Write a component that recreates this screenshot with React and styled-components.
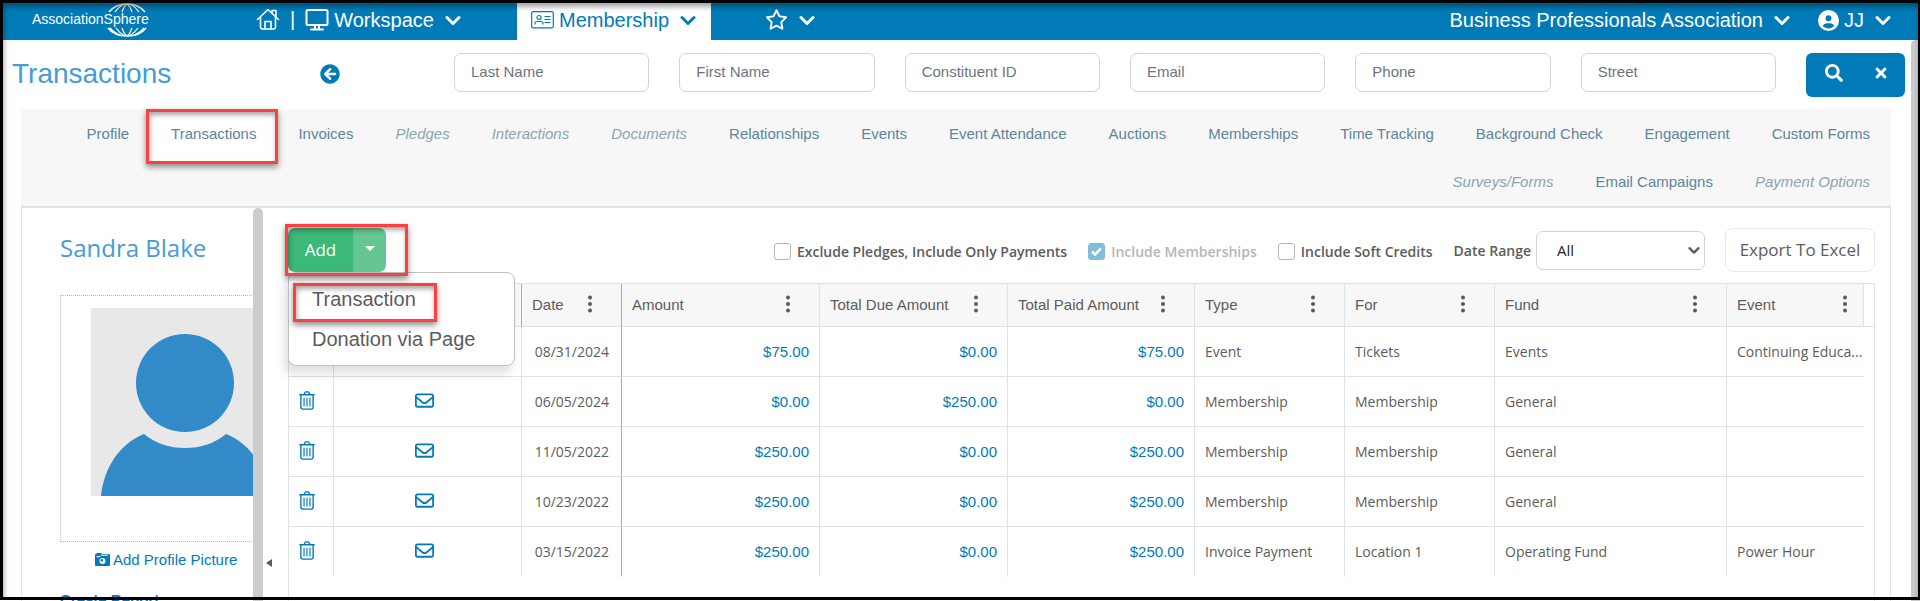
import styled, { createGlobalStyle, css } from "styled-components";
import { FaRegEnvelope, FaRegStar, FaCircleUser } from "react-icons/fa6";
import { FaArrowCircleLeft, FaSearch, FaTimes } from "react-icons/fa";

const SANS = `"Liberation Sans", Arial, sans-serif`;
const UI = `"Open Sans", "Noto Sans", sans-serif`;

const BLUE = "#007bb8";
const LINE = "#dee2e6";
const TEXT = "#5c5c5c";

const GlobalStyle = createGlobalStyle`
  *, *::before, *::after {
    box-sizing: border-box;
  }
  body {
    margin: 0;
    font-family: ${SANS};
    font-size: 15px;
    color: ${TEXT};
    background: white;
  }
  a {
    color: inherit;
    text-decoration: none;
  }
  button {
    font-family: inherit;
    cursor: pointer;
  }
`;

const Page = styled.div`
  position: relative;
  display: flex;
  flex-direction: column;
  height: 100vh;
  overflow: hidden;
`;

const Frame = styled.div`
  position: absolute;
  inset: 0 0 1px 0;
  z-index: 20;
  border: 3px solid black;
  border-right-width: 2px;
  box-shadow: inset 1px 4px 5px rgba(0, 0, 0, 0.35);
  pointer-events: none;
`;

/* red marker laid over a control */
const Marker = styled.span`
  position: absolute;
  inset: ${({ $inset }) => $inset};
  z-index: ${({ $behind }) => ($behind ? -1 : 5)};
  border: 3px solid #fb4242;
  background: ${({ $behind }) => ($behind ? "white" : "none")};
  box-shadow:
    0 3px 6px rgba(0, 0, 0, 0.45),
    inset 1px 3px 5px rgba(0, 0, 0, 0.35);
  pointer-events: none;
`;

/* ---------- top bar ---------- */

const TopBar = styled.header`
  display: flex;
  flex: none;
  height: 40px;
  padding-left: 32px;
  padding-right: 29px;
  background: ${BLUE};
  color: white;
  font-size: 20px;
`;

const LogoLink = styled.a`
  display: block;
  width: 118px;
  height: 37px;
  margin-right: 106px;
`;

const BarLink = styled.a`
  display: flex;
  align-items: center;
`;

const BarButton = styled.button`
  display: flex;
  align-items: center;
  gap: 5px;
  padding: 1px 0 8px;
  border: none;
  background: none;
  color: inherit;
  font-size: 20px;
  line-height: 24px;
  ${({ $active }) =>
    $active &&
    css`
      background: white;
      color: ${BLUE};
      padding-left: 14px;
      padding-right: 15px;
    `}
  > svg {
    flex: none;
  }
  > svg:last-child {
    margin-left: 6px;
  }
`;

const WorkspaceGroup = styled.div`
  display: flex;
  align-items: flex-start;
  gap: 10px;
  padding-top: 7px;
  width: 261px;
`;

const Divider = styled.span`
  line-height: 24px;
`;

const MembershipTab = styled.div`
  display: flex;
  padding-top: 7px;
  background: white;
`;

const StarGroup = styled.div`
  padding-top: 7px;
  margin-left: 54px;
`;

const AccountGroup = styled.div`
  display: flex;
  gap: 28px;
  padding-top: 7px;
  margin-left: auto;
`;

/* ---------- page scroll area ---------- */

const Scroller = styled.div`
  display: flex;
  flex: 1;
  min-height: 0;
`;

const Content = styled.div`
  display: flex;
  flex-direction: column;
  flex: 1;
  min-width: 0;
`;

const ScrollTrack = styled.div`
  flex: none;
  width: 9px;
  border-top-left-radius: 5px;
  background: #cacaca;
`;

/* ---------- search row ---------- */

const SearchRow = styled.form`
  display: flex;
  align-items: flex-start;
  flex: none;
  padding: 13px 6px 12px 12px;
`;

const TitleBlock = styled.div`
  display: flex;
  justify-content: space-between;
  align-items: center;
  width: 328px;
  height: 42px;
  margin-right: 114px;
`;

const Title = styled.h1`
  margin: 0;
  color: #459cd6;
  font-size: 28px;
  font-weight: normal;
  line-height: 32px;
`;

const BackButton = styled.button`
  display: flex;
  padding: 0;
  border: none;
  background: none;
  color: ${BLUE};
  font-size: 20px;
`;

const Fields = styled.div`
  display: grid;
  grid-template-columns: repeat(6, 1fr);
  gap: 30px;
  flex: 1;
  margin-right: 30px;
`;

const Field = styled.input`
  width: 100%;
  min-width: 0;
  height: 39px;
  padding: 0 15px 2px 16px;
  border: 1px solid #ced4da;
  border-radius: 7px;
  font-family: ${SANS};
  font-size: 15px;
  &::placeholder {
    color: #6c757d;
    opacity: 1;
  }
`;

const SearchButtons = styled.div`
  display: flex;
  width: 99px;
  height: 44px;
  padding-left: 4px;
  border-radius: 6px;
  background: ${BLUE};
`;

const SearchButton = styled.button`
  display: flex;
  flex: 1;
  align-items: center;
  justify-content: center;
  padding: 0 0 4px;
  border: none;
  background: none;
  color: white;
  font-size: ${({ $size }) => $size}px;
`;

/* ---------- section tabs ---------- */

const Tabs = styled.nav`
  position: relative;
  z-index: 1;
  display: flex;
  flex-wrap: wrap;
  justify-content: flex-end;
  flex: none;
  margin: 0 20px 0 21px;
  padding-top: 1px;
  border-bottom: 2px solid ${LINE};
  background: #f7f7f7;
`;

const Tab = styled.a`
  position: relative;
  z-index: 0;
  padding: 0 21px;
  color: ${({ $muted }) => ($muted ? "#8aa5b3" : "#5c859d")};
  font-style: ${({ $muted }) => ($muted ? "italic" : "normal")};
  line-height: 48px;
  white-space: nowrap;
`;

/* ---------- body ---------- */

const Body = styled.div`
  display: flex;
  flex: 1;
  min-height: 0;
  margin: 0 20px 0 21px;
  border: solid ${LINE};
  border-width: 0 1px;
`;

const Sidebar = styled.aside`
  flex: none;
  width: 231px;
  padding: 24px 0 0 38px;
  overflow: hidden;
`;

const PersonName = styled.h2`
  margin: 0 0 31px;
  color: #459cd6;
  font-family: ${UI};
  font-size: 24px;
  font-weight: normal;
  line-height: 32px;
`;

const PhotoBox = styled.div`
  width: 250px;
  height: 247px;
  padding: 12px 30px;
  border: 1px dotted #b9b9b9;
`;

const PhotoLink = styled.a`
  display: flex;
  align-items: center;
  gap: 3px;
  margin: 9px 0 22px 35px;
  color: ${BLUE};
  line-height: 18px;
  white-space: nowrap;
`;

const RecordLink = styled.a`
  color: ${BLUE};
  font-weight: bold;
  line-height: 18px;
`;

const Splitter = styled.div`
  flex: none;
  width: 10px;
  border-radius: 5px 5px 0 0;
  background: #cccccc;
`;

const CollapseButton = styled.button`
  align-self: flex-end;
  flex: none;
  display: flex;
  width: 15px;
  padding: 0 0 0 3px;
  margin-bottom: 34px;
  border: none;
  background: none;
  color: ${TEXT};
`;

const Main = styled.main`
  display: flex;
  flex-direction: column;
  flex: 1;
  min-width: 0;
  padding: 20px 15px 0 10px;
`;

const Toolbar = styled.div`
  display: flex;
  align-items: center;
  flex: none;
  margin-bottom: 11px;
  font-family: ${UI};
  font-size: 14px;
  font-weight: 600;
`;

const SplitButton = styled.div`
  position: relative;
  display: flex;
  height: 44px;
  margin-right: auto;
`;

const AddButton = styled.button`
  width: 65px;
  padding: 0 0 2px;
  border: none;
  border-radius: 7px 0 0 7px;
  background: #3cb878;
  color: white;
  font-size: 17px;
`;

const AddToggle = styled.button`
  display: flex;
  align-items: center;
  justify-content: center;
  width: 33px;
  padding: 0 0 4px;
  border: none;
  border-radius: 0 7px 7px 0;
  background: #66c693;
`;

const Menu = styled.ul`
  position: absolute;
  top: 44px;
  left: 0;
  z-index: 4;
  width: 227px;
  margin: 0;
  padding: 6px 0;
  border: 1px solid #c0c0c0;
  border-radius: 8px;
  background: white;
  box-shadow: -4px 8px 10px rgba(0, 0, 0, 0.12);
  list-style: none;
`;

const MenuItem = styled.li`
  position: relative;
`;

const MenuLink = styled.a`
  display: block;
  padding: 0 23px;
  font-family: ${SANS};
  font-size: 20px;
  font-weight: normal;
  line-height: 40px;
`;

const Check = styled.label`
  display: flex;
  align-items: center;
  gap: 6px;
  margin-right: 21px;
  padding-top: 2px;
  color: ${({ $disabled }) => ($disabled ? "#b6b6b6" : TEXT)};
  white-space: nowrap;
`;

const CheckInput = styled.input`
  appearance: none;
  width: 17px;
  height: 17px;
  margin: 0;
  border: 1px solid #b5b5b5;
  border-radius: 3px;
  background: white;
  &:checked {
    border-color: #80bddb;
    background: #80bddb;
  }
`;

const CheckBox = styled.span`
  display: grid;
  > * {
    grid-area: 1 / 1;
    place-self: center;
  }
`;

const RangeLabel = styled.label`
  margin-right: 5px;
  white-space: nowrap;
`;

const SelectBox = styled.span`
  display: grid;
  width: 169px;
  margin-right: 20px;
  > * {
    grid-area: 1 / 1;
  }
  > svg {
    place-self: center end;
    margin-right: 5px;
    pointer-events: none;
  }
`;

const Select = styled.select`
  appearance: none;
  width: 100%;
  height: 39px;
  padding: 0 20px;
  border: 1px solid #ced4da;
  border-radius: 7px;
  background: white;
  color: #212529;
  font-family: ${UI};
  font-size: 15px;
`;

const ExportButton = styled.button`
  width: 150px;
  height: 44px;
  padding: 0 0 1px;
  border: 1px solid #e9ebed;
  border-radius: 8px;
  background: white;
  color: ${TEXT};
  font-size: 17px;
  white-space: nowrap;
`;

/* ---------- grid ---------- */

const GridBox = styled.div`
  flex: 1;
  min-height: 0;
  border: 1px solid ${LINE};
  border-bottom: none;
`;

const GridHeadLine = styled.div`
  background: linear-gradient(${LINE}, ${LINE}) 0 42px / 100% 1px no-repeat;
`;

const GridClip = styled.div`
  position: relative;
  margin-right: 10px;
  overflow: hidden;
  &::after {
    content: "";
    position: absolute;
    top: 0;
    right: 0;
    width: 1px;
    height: 42px;
    background: ${LINE};
  }
`;

const Table = styled.table`
  width: calc(100% + 13px);
  border-collapse: separate;
  border-spacing: 0;
  table-layout: fixed;
`;

const Col = styled.col`
  width: ${({ $width }) => ($width ? `${$width}px` : "auto")};
`;

const HeadCell = styled.th`
  height: 43px;
  padding: 0 28px 2px 10px;
  border-bottom: 1px solid ${LINE};
  border-right: 1px solid ${({ $dark }) => ($dark ? "#a9abad" : LINE)};
  background: #f7f7f7;
  font-weight: normal;
  text-align: left;
  white-space: nowrap;
`;

const HeadContent = styled.div`
  display: flex;
  align-items: center;
  justify-content: space-between;
`;

const MenuDots = styled.button`
  display: flex;
  padding: 0 0 1px;
  border: none;
  background: none;
  color: ${TEXT};
`;

const Cell = styled.td`
  height: 50px;
  padding: 0 ${({ $padRight }) => $padRight || 10}px 0 10px;
  border-bottom: 1px solid ${LINE};
  border-right: 1px solid ${({ $dark }) => ($dark ? "#a9abad" : LINE)};
  font-family: ${UI};
  font-size: 14px;
  text-align: ${({ $align }) => $align || "left"};
  white-space: nowrap;
  overflow: hidden;
  text-overflow: ellipsis;
  tr:last-child > & {
    border-bottom-color: transparent;
  }
`;

const AmountLink = styled.a`
  color: ${BLUE};
  font-family: ${SANS};
  font-size: 15px;
`;

const IconButton = styled.button`
  display: inline-flex;
  padding: 0 0 3px;
  border: none;
  background: none;
  color: ${BLUE};
  font-size: 19px;
  vertical-align: middle;
`;

/* ---------- drawings ---------- */

const Chevron = ({ size = 16 }) => (
  <svg width={size} height={size} viewBox="0 0 16 16" fill="none" stroke="currentColor" strokeWidth="3" strokeLinecap="round" strokeLinejoin="round">
    <path d="M2 5.5l6 6 6-6" />
  </svg>
);

const Logo = () => (
  <svg width="118" height="37" viewBox="0 0 118 37" fill="none" stroke="white" strokeWidth="1.4">
    <path d="M77 12C81 7 87 4 95 4s14 3 18 8" />
    <path d="M83 12c2-3 5-6 9-8M90 12c1-3 2-6 5-8M107 12c-2-3-5-6-9-8M100 12c-1-3-2-6-5-8" strokeWidth="1.2" />
    <path d="M76 28c4 5 10 8 19 8s15-3 19-8" strokeWidth="1.6" />
    <path d="M78 28c2 3 5 5 9 7M112 28c-2 3-5 5-9 7" strokeWidth="1.8" />
    <path d="M84 28c2 3 5 6 9 8M90 28c1 3 2 6 5 8M106 28c-2 3-5 6-9 8M100 28c-1 3-2 6-5 8" strokeWidth="1.2" />
    <text x="0" y="24" fill="white" stroke="none" fontFamily="Liberation Sans, Arial, sans-serif" fontSize="14">
      AssociationSphere
    </text>
  </svg>
);

const HomeIcon = () => (
  <svg width="24" height="24" viewBox="0 0 24 24" fill="none" stroke="currentColor" strokeWidth="1.6" strokeLinecap="round" strokeLinejoin="round">
    <path d="M1.5 12.5L12 2.5l10.500 10" />
    <path d="M4.500 10.500V20a2 2 0 0 0 2 2h11a2 2 0 0 0 2-2v-9.500" />
    <path d="M9 22v-7.500h6V22M16 6V3.500h4V10" />
  </svg>
);

const MonitorIcon = () => (
  <svg width="24" height="24" viewBox="0 0 24 24" fill="none" stroke="currentColor" strokeWidth="2" strokeLinejoin="round">
    <rect x="1.500" y="2" width="21" height="15" rx="1.500" />
    <path d="M10 17v4M14 17v4M6 21.500h12" strokeLinecap="round" />
  </svg>
);

const CardIcon = () => (
  <svg width="23" height="18" viewBox="0 0 23 18" fill="none" stroke="currentColor" strokeWidth="1.2">
    <rect x="0.700" y="0.700" width="21.600" height="16.200" rx="1.500" />
    <circle cx="8" cy="6.500" r="2" />
    <path d="M4 13.500v-1c0-1 1-2 2-2h4c1 0 2 1 2 2v1M13.500 5.500h6M13.500 8.500h6M13.500 11.500h6" />
  </svg>
);

const CameraIcon = () => (
  <svg width="15" height="14" viewBox="0 0 15 14">
    <path fill="currentColor" d="M2 0h4l1 1h7a1 1 0 0 1 1 1v10a1 1 0 0 1-1 1H1a1 1 0 0 1-1-1V2a1 1 0 0 1 1-1z" />
    <path d="M1.500 3.700H5l1.500-1.500H13" stroke="white" fill="none" />
    <circle cx="7.500" cy="8" r="3" fill="white" />
    <circle cx="6.800" cy="7.200" r="1.200" fill="currentColor" />
  </svg>
);

const TrashIcon = () => (
  <svg width="16" height="19" viewBox="0 0 15 18" fill="none" stroke="currentColor" strokeWidth="1.300" strokeLinecap="round">
    <path d="M.700 3.500h13.600M4.700 3.300l.9-1.900c.2-.4.500-.6.900-.6h2c.400 0 .7.200.9.600l.9 1.900" />
    <path d="M1.700 3.700v11.500c0 1.200.8 2 2 2h7.600c1.200 0 2-.8 2-2V3.700" />
    <path d="M4.700 6.700v7.500M7.500 6.700v7.500M10.300 6.700v7.500" strokeWidth="1.100" />
  </svg>
);

const DotsIcon = () => (
  <svg width="6" height="18" viewBox="0 0 6 18" fill="currentColor">
    <circle cx="3" cy="2.500" r="2" />
    <circle cx="3" cy="9" r="2" />
    <circle cx="3" cy="15.500" r="2" />
  </svg>
);

const Avatar = () => (
  <svg width="188" height="188" viewBox="0 0 188 188" role="img" aria-label="Profile picture">
    <rect width="188" height="188" fill="#e8e8e8" />
    <circle cx="94" cy="75" r="49" fill="#338ac8" />
    <path d="M10 188C13 160 28 136 53 126Q70 140 94 140T135 126C160 136 175 160 178 188z" fill="#338ac8" />
  </svg>
);

/* ---------- data ---------- */

const fields = ["Last Name", "First Name", "Constituent ID", "Email", "Phone", "Street"];

const tabs = [
  { label: "Profile" },
  { label: "Transactions", active: true },
  { label: "Invoices" },
  { label: "Pledges", muted: true },
  { label: "Interactions", muted: true },
  { label: "Documents", muted: true },
  { label: "Relationships" },
  { label: "Events" },
  { label: "Event Attendance" },
  { label: "Auctions" },
  { label: "Memberships" },
  { label: "Time Tracking" },
  { label: "Background Check" },
  { label: "Engagement" },
  { label: "Custom Forms" },
  { label: "Surveys/Forms", muted: true },
  { label: "Email Campaigns" },
  { label: "Payment Options", muted: true },
];

const columns = [
  { width: 45 },
  { width: 188, dark: true },
  { label: "Date", width: 100, dark: true },
  { label: "Amount", width: 198 },
  { label: "Total Due Amount", width: 188 },
  { label: "Total Paid Amount", width: 187 },
  { label: "Type", width: 150 },
  { label: "For", width: 150 },
  { label: "Fund", width: 232 },
  { label: "Event" },
];

const rows = [
  { date: "08/31/2024", amounts: ["$75.00", "$0.00", "$75.00"], info: ["Event", "Tickets", "Events", "Continuing Educa..."] },
  { date: "06/05/2024", amounts: ["$0.00", "$250.00", "$0.00"], info: ["Membership", "Membership", "General", ""] },
  { date: "11/05/2022", amounts: ["$250.00", "$0.00", "$250.00"], info: ["Membership", "Membership", "General", ""] },
  { date: "10/23/2022", amounts: ["$250.00", "$0.00", "$250.00"], info: ["Membership", "Membership", "General", ""] },
  { date: "03/15/2022", amounts: ["$250.00", "$0.00", "$250.00"], info: ["Invoice Payment", "Location 1", "Operating Fund", "Power Hour"] },
];

function Header() {
  return (
    <TopBar>
      <LogoLink href="#" aria-label="AssociationSphere">
        <Logo />
      </LogoLink>
      <WorkspaceGroup>
        <BarLink href="#" aria-label="Home">
          <HomeIcon />
        </BarLink>
        <Divider>|</Divider>
        <BarButton>
          <MonitorIcon />
          Workspace
          <Chevron />
        </BarButton>
      </WorkspaceGroup>
      <MembershipTab>
        <BarButton $active>
          <CardIcon />
          Membership
          <Chevron />
        </BarButton>
      </MembershipTab>
      <StarGroup>
        <BarButton aria-label="Favorites">
          <FaRegStar size={23} />
          <Chevron />
        </BarButton>
      </StarGroup>
      <AccountGroup>
        <BarButton>
          Business Professionals Association
          <Chevron />
        </BarButton>
        <BarButton>
          <FaCircleUser size={21} />
          JJ
          <Chevron />
        </BarButton>
      </AccountGroup>
    </TopBar>
  );
}

function SearchBar() {
  return (
    <SearchRow onSubmit={(e) => e.preventDefault()}>
      <TitleBlock>
        <Title>Transactions</Title>
        <BackButton type="button" aria-label="Back">
          <FaArrowCircleLeft />
        </BackButton>
      </TitleBlock>
      <Fields>
        {fields.map((name) => (
          <Field key={name} type="text" placeholder={name} aria-label={name} />
        ))}
      </Fields>
      <SearchButtons>
        <SearchButton aria-label="Search" $size={18}>
          <FaSearch />
        </SearchButton>
        <SearchButton type="reset" aria-label="Clear" $size={16}>
          <FaTimes />
        </SearchButton>
      </SearchButtons>
    </SearchRow>
  );
}

function ActionBar() {
  return (
    <Toolbar>
      <SplitButton>
        <AddButton>Add</AddButton>
        <AddToggle aria-label="More add options">
          <svg width="10" height="5" viewBox="0 0 10 5">
            <path d="M0 0h10L5 5z" fill="white" />
          </svg>
        </AddToggle>
        <Marker $inset="-4px -22px -4px -3px" />
        <Menu>
          <MenuItem>
            <MenuLink href="#">Transaction</MenuLink>
            <Marker $inset="4px 77px -3px 4px" />
          </MenuItem>
          <MenuItem>
            <MenuLink href="#">Donation via Page</MenuLink>
          </MenuItem>
        </Menu>
      </SplitButton>
      <Check>
        <CheckInput type="checkbox" />
        Exclude Pledges, Include Only Payments
      </Check>
      <Check $disabled>
        <CheckBox>
          <CheckInput type="checkbox" defaultChecked disabled />
          <svg width="11" height="9" viewBox="0 0 11 9" fill="none" stroke="white" strokeWidth="2.500">
            <path d="M1 4.500l3 3 6-6" />
          </svg>
        </CheckBox>
        Include Memberships
      </Check>
      <Check>
        <CheckInput type="checkbox" />
        Include Soft Credits
      </Check>
      <RangeLabel htmlFor="range">Date Range</RangeLabel>
      <SelectBox>
        <Select id="range">
          <option>All</option>
        </Select>
        <Chevron size={12} />
      </SelectBox>
      <ExportButton>Export To Excel</ExportButton>
    </Toolbar>
  );
}

function TransactionGrid() {
  return (
    <GridBox>
      <GridHeadLine>
        <GridClip>
          <Table>
            <colgroup>
              {columns.map((col, i) => (
                <Col key={i} $width={col.width} />
              ))}
            </colgroup>
            <thead>
              <tr>
                {columns.map((col, i) => (
                  <HeadCell key={i} $dark={col.dark}>
                    {col.label && (
                      <HeadContent>
                        {col.label}
                        <MenuDots aria-label={`${col.label} menu`}>
                          <DotsIcon />
                        </MenuDots>
                      </HeadContent>
                    )}
                  </HeadCell>
                ))}
              </tr>
            </thead>
            <tbody>
              {rows.map((row) => (
                <tr key={row.date}>
                  <Cell>
                    <IconButton aria-label="Delete">
                      <TrashIcon />
                    </IconButton>
                  </Cell>
                  <Cell $align="center" $padRight={16}>
                    <IconButton aria-label="Email">
                      <FaRegEnvelope />
                    </IconButton>
                  </Cell>
                  <Cell $align="right" $padRight={12} $dark>
                    {row.date}
                  </Cell>
                  {row.amounts.map((amount, i) => (
                    <Cell key={i} $align="right">
                      <AmountLink href="#">{amount}</AmountLink>
                    </Cell>
                  ))}
                  {row.info.map((value, i) => (
                    <Cell key={i}>{value}</Cell>
                  ))}
                </tr>
              ))}
            </tbody>
          </Table>
        </GridClip>
      </GridHeadLine>
    </GridBox>
  );
}

export default function App() {
  return (
    <Page>
      <GlobalStyle />
      <Header />
      <Scroller>
        <Content>
          <SearchBar />
          <Tabs>
            {tabs.map((tab) => (
              <Tab key={tab.label} href="#" $muted={tab.muted}>
                {tab.label}
                {tab.active && <Marker $inset="-1px -1px -6px -4px" $behind />}
              </Tab>
            ))}
          </Tabs>
          <Body>
            <Sidebar>
              <PersonName>Sandra Blake</PersonName>
              <PhotoBox>
                <Avatar />
              </PhotoBox>
              <PhotoLink href="#">
                <CameraIcon />
                Add Profile Picture
              </PhotoLink>
              <RecordLink href="#">Create Report</RecordLink>
            </Sidebar>
            <Splitter />
            <CollapseButton aria-label="Collapse panel">
              <svg width="6" height="8" viewBox="0 0 6 8">
                <path d="M6 0v8L0 4z" fill="currentColor" />
              </svg>
            </CollapseButton>
            <Main>
              <ActionBar />
              <TransactionGrid />
            </Main>
          </Body>
        </Content>
        <ScrollTrack />
      </Scroller>
      <Frame />
    </Page>
  );
}
